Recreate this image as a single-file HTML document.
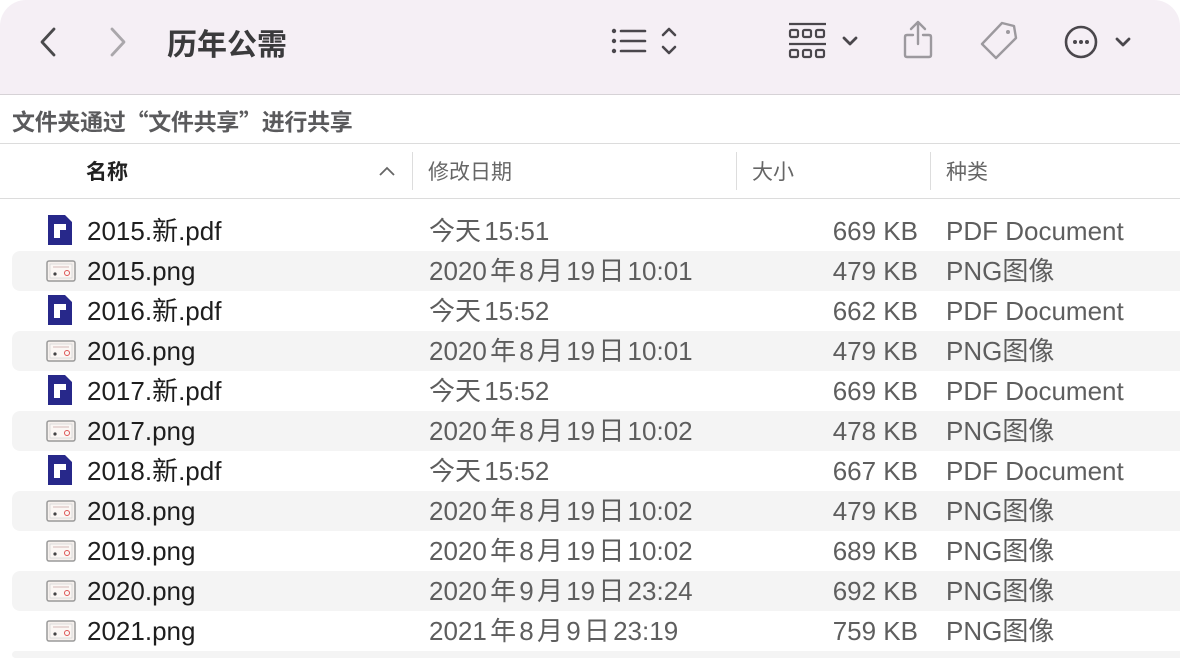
<!DOCTYPE html>
<html><head><meta charset="utf-8"><style>
*{margin:0;padding:0;box-sizing:border-box}
html,body{width:1180px;height:658px;overflow:hidden}
body{background:#fff;font-family:"Liberation Sans","Noto Sans CJK SC",sans-serif;position:relative}
.tb{position:absolute;left:0;top:0;width:1180px;height:95px;background:#f5eff5;border-bottom:1px solid #d6d2d6;border-radius:26px 26px 0 0}
.ttl{position:absolute;left:167px;top:22px;font-size:30px;font-weight:bold;color:#3a3a3c;font-family:"Noto Sans CJK SC",sans-serif;line-height:40px}
.share{position:absolute;left:12px;top:100px;font-size:23px;font-weight:bold;color:#5a5a5c;font-family:"Noto Sans CJK SC",sans-serif;line-height:40px;letter-spacing:-0.3px}
.hl{position:absolute;left:0;width:1180px;height:1px;background:#dcdcdc}
.hd{position:absolute;top:151px;font-size:21px;color:#666;font-family:"Noto Sans CJK SC",sans-serif;line-height:40px}
.sep{position:absolute;top:152px;width:1px;height:38px;background:#ddd}
.row{position:absolute;left:12px;width:1168px;height:40px;border-radius:8px 0 0 8px}
.row.s{background:#f4f4f4}
.row span{position:absolute;top:0;font-size:26px;line-height:40px;height:40px;white-space:nowrap}
.n{left:75px;color:#1e1e1e}
.d{left:417px;color:#5e5e5e;word-spacing:-4px}
.z{right:262px;color:#5e5e5e}
.k{left:934px;color:#5e5e5e}
.ic{position:absolute;left:34px;top:6px}
</style></head><body>
<div class="tb">
<svg style="position:absolute;left:36px;top:26px" width="24" height="32"><path d="M18 3 L6 16 L18 29" stroke="#4a4a4c" stroke-width="2.8" fill="none" stroke-linecap="round" stroke-linejoin="round"/></svg>
<svg style="position:absolute;left:106px;top:26px" width="24" height="32"><path d="M6 3 L18 16 L6 29" stroke="#aaa7ab" stroke-width="2.8" fill="none" stroke-linecap="round" stroke-linejoin="round"/></svg>
<div class="ttl">历年公需</div>
<svg style="position:absolute;left:608px;top:24px" width="80" height="36"><g fill="#4a474c"><circle cx="6" cy="7" r="2.2"/><circle cx="6" cy="17" r="2.2"/><circle cx="6" cy="27" r="2.2"/></g><g stroke="#4a474c" stroke-width="2.6" stroke-linecap="round"><path d="M13 7H37M13 17H37M13 27H37"/></g><path d="M55 11L61 5L67 11M55 23L61 29L67 23" stroke="#4a474c" stroke-width="2.6" fill="none" stroke-linecap="round" stroke-linejoin="round"/></svg>
<svg style="position:absolute;left:786px;top:20px" width="80" height="42"><g stroke="#4a474c" stroke-width="2.2" fill="none"><path d="M3 4H40M3 24H40"/><rect x="4" y="10" width="8" height="7" rx="1.5"/><rect x="17" y="10" width="8" height="7" rx="1.5"/><rect x="30" y="10" width="8" height="7" rx="1.5"/><rect x="4" y="30" width="8" height="7" rx="1.5"/><rect x="17" y="30" width="8" height="7" rx="1.5"/><rect x="30" y="30" width="8" height="7" rx="1.5"/><path d="M58 18L64 24L70 18" stroke-width="2.8" stroke-linecap="round" stroke-linejoin="round"/></g></svg>
<svg style="position:absolute;left:898px;top:18px" width="40" height="44"><g stroke="#9c999e" stroke-width="2.4" fill="none" stroke-linecap="round" stroke-linejoin="round"><path d="M20 4V26M13 11L20 4L27 11"/><path d="M15 17H9Q7 17 7 19V37Q7 39 9 39H31Q33 39 33 37V19Q33 17 31 17H25"/></g></svg>
<svg style="position:absolute;left:974px;top:18px" width="46" height="46"><g stroke="#9c999e" stroke-width="2.4" fill="none" stroke-linejoin="round"><path d="M28 5L40 8L42 20L22 40L8 26Z"/></g><circle cx="34" cy="14" r="2" fill="#9c999e"/></svg>
<svg style="position:absolute;left:1062px;top:22px" width="74" height="40"><circle cx="19" cy="20" r="15" stroke="#4a474c" stroke-width="2.6" fill="none"/><g fill="#4a474c"><circle cx="13" cy="20" r="2"/><circle cx="19" cy="20" r="2"/><circle cx="25" cy="20" r="2"/></g><path d="M55 17L61 23L67 17" stroke="#4a474c" stroke-width="2.8" fill="none" stroke-linecap="round" stroke-linejoin="round"/></svg>
</div>
<div class="share">文件夹通过“文件共享”进行共享</div>
<div class="hl" style="top:143px"></div>
<div class="hd" style="left:86px;font-weight:bold;color:#222">名称</div>
<svg style="position:absolute;left:378px;top:165px" width="18" height="12"><path d="M2 10L9 3L16 10" stroke="#666" stroke-width="1.8" fill="none"/></svg>
<div class="sep" style="left:412px"></div>
<div class="hd" style="left:428px">修改日期</div>
<div class="sep" style="left:736px"></div>
<div class="hd" style="left:752px">大小</div>
<div class="sep" style="left:930px"></div>
<div class="hd" style="left:946px">种类</div>
<div class="hl" style="top:198px"></div>
<svg width="0" height="0" style="position:absolute"><defs>
<symbol id="pdf" viewBox="0 0 28 32"><path d="M2 1H19L26 8V31H2Z" fill="#27288a"/><path d="M8 10H20V16H14V24H8Z" fill="#fff"/></symbol>
<symbol id="png" viewBox="0 0 30 24"><rect x="1" y="2" width="28" height="20" rx="2" fill="#f6f1ee" stroke="#9a9a9a" stroke-width="1.5"/><rect x="4" y="5" width="22" height="14" fill="#fbf7f4" stroke="#ccc" stroke-width=".6"/><circle cx="9" cy="15" r="1.6" fill="#444"/><circle cx="21" cy="14" r="2.5" fill="none" stroke="#d55" stroke-width="1"/><path d="M7 8H23" stroke="#caa" stroke-width=".8"/></symbol>
</defs></svg>
<div class="row" style="top:211px"><svg class="ic" width="28" height="32" style="top:3px"><use href="#pdf"/></svg><span class="n">2015.新.pdf</span><span class="d">今天 15:51</span><span class="z">669 KB</span><span class="k">PDF Document</span></div>
<div class="row s" style="top:251px"><svg class="ic" width="30" height="24" style="top:8px"><use href="#png"/></svg><span class="n">2015.png</span><span class="d">2020 年 8 月 19 日 10:01</span><span class="z">479 KB</span><span class="k">PNG图像</span></div>
<div class="row" style="top:291px"><svg class="ic" width="28" height="32" style="top:3px"><use href="#pdf"/></svg><span class="n">2016.新.pdf</span><span class="d">今天 15:52</span><span class="z">662 KB</span><span class="k">PDF Document</span></div>
<div class="row s" style="top:331px"><svg class="ic" width="30" height="24" style="top:8px"><use href="#png"/></svg><span class="n">2016.png</span><span class="d">2020 年 8 月 19 日 10:01</span><span class="z">479 KB</span><span class="k">PNG图像</span></div>
<div class="row" style="top:371px"><svg class="ic" width="28" height="32" style="top:3px"><use href="#pdf"/></svg><span class="n">2017.新.pdf</span><span class="d">今天 15:52</span><span class="z">669 KB</span><span class="k">PDF Document</span></div>
<div class="row s" style="top:411px"><svg class="ic" width="30" height="24" style="top:8px"><use href="#png"/></svg><span class="n">2017.png</span><span class="d">2020 年 8 月 19 日 10:02</span><span class="z">478 KB</span><span class="k">PNG图像</span></div>
<div class="row" style="top:451px"><svg class="ic" width="28" height="32" style="top:3px"><use href="#pdf"/></svg><span class="n">2018.新.pdf</span><span class="d">今天 15:52</span><span class="z">667 KB</span><span class="k">PDF Document</span></div>
<div class="row s" style="top:491px"><svg class="ic" width="30" height="24" style="top:8px"><use href="#png"/></svg><span class="n">2018.png</span><span class="d">2020 年 8 月 19 日 10:02</span><span class="z">479 KB</span><span class="k">PNG图像</span></div>
<div class="row" style="top:531px"><svg class="ic" width="30" height="24" style="top:8px"><use href="#png"/></svg><span class="n">2019.png</span><span class="d">2020 年 8 月 19 日 10:02</span><span class="z">689 KB</span><span class="k">PNG图像</span></div>
<div class="row s" style="top:571px"><svg class="ic" width="30" height="24" style="top:8px"><use href="#png"/></svg><span class="n">2020.png</span><span class="d">2020 年 9 月 19 日 23:24</span><span class="z">692 KB</span><span class="k">PNG图像</span></div>
<div class="row" style="top:611px"><svg class="ic" width="30" height="24" style="top:8px"><use href="#png"/></svg><span class="n">2021.png</span><span class="d">2021 年 8 月 9 日 23:19</span><span class="z">759 KB</span><span class="k">PNG图像</span></div>
<div class="row s" style="top:651px;height:7px"></div>
</body></html>
